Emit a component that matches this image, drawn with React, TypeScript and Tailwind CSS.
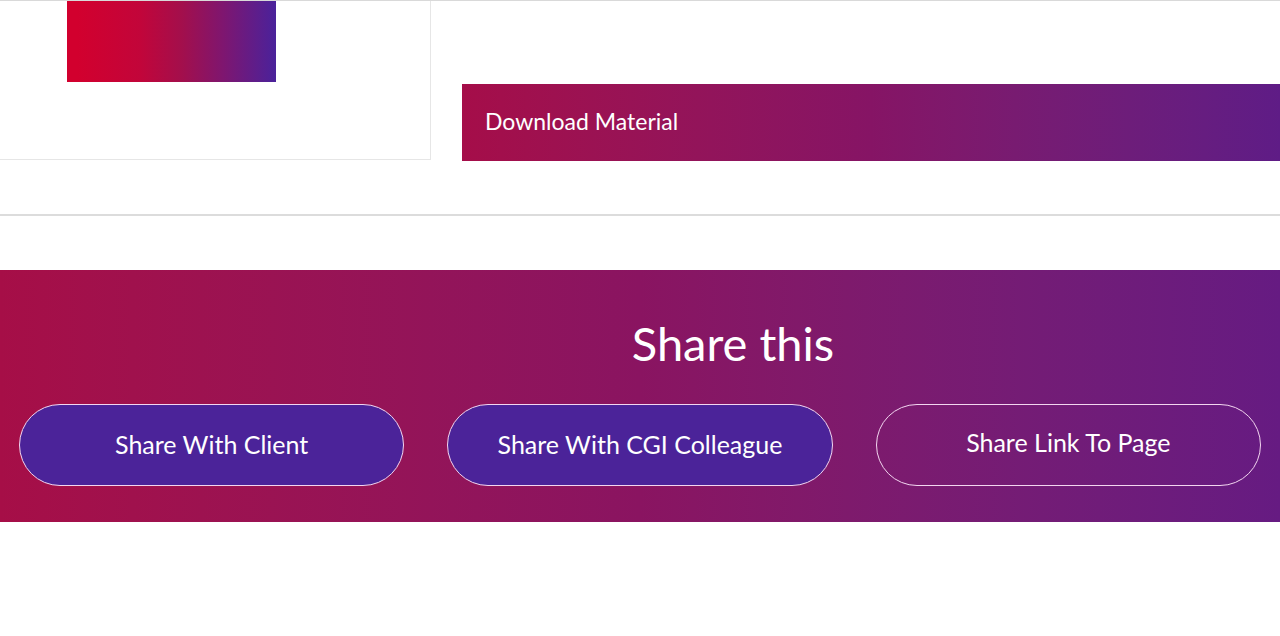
import React from "react";

const font = { fontFamily: "Lato, 'Noto Sans', sans-serif" };

function ShareButton({ label, filled }: { label: string; filled?: boolean }) {
  return (
    <button
      className={
        filled
          ? "h-[82px] flex-1 rounded-full border-[1.5px] border-[#f3d6f0] bg-[#4b2399] text-[25px] text-white"
          : "h-[82px] flex-1 rounded-full border-[1.5px] border-[#f3d6f0] bg-transparent pb-[5px] text-[25px] text-white"
      }
    >
      {label}
    </button>
  );
}

export default function App() {
  return (
    <div className="w-[1280px] h-[636px] overflow-hidden bg-white" style={font}>
      <div className="border-t border-[#d9d9d9]">
        <div className="flex h-[159px]">
          <div className="w-[431px] border-r border-b border-[#e6e6e6] pl-[67px]">
            <div className="h-[81px] w-[209px] bg-[linear-gradient(90deg,#d2002e_5%,#c2053a_35%,#a30f4c_55%,#7e1670_75%,#4a229b)]" />
          </div>
          <div className="flex-1 pl-[31px] pt-[83px]">
            <div className="flex h-[77px] items-center bg-gradient-to-r from-[#a50d49] via-[#861465] to-[#5f1c86] pb-[2px] pl-[23px] text-[23px] text-white">
              Download Material
            </div>
          </div>
        </div>
        <div className="h-[56px] border-b-2 border-[#dcdcdc]" />
        <div className="h-[54px]" />
        <section className="h-[252px] bg-gradient-to-r from-[#a60e47] via-[#8a1461] to-[#661b82] px-[19px] pt-[46px]">
          <h2 className="pl-[186px] text-center text-[47px] leading-[54px] text-white">Share this</h2>
          <div className="mt-[34px] flex gap-[43px]">
            <ShareButton label="Share With Client" filled />
            <ShareButton label="Share With CGI Colleague" filled />
            <ShareButton label="Share Link To Page" />
          </div>
        </section>
      </div>
    </div>
  );
}
